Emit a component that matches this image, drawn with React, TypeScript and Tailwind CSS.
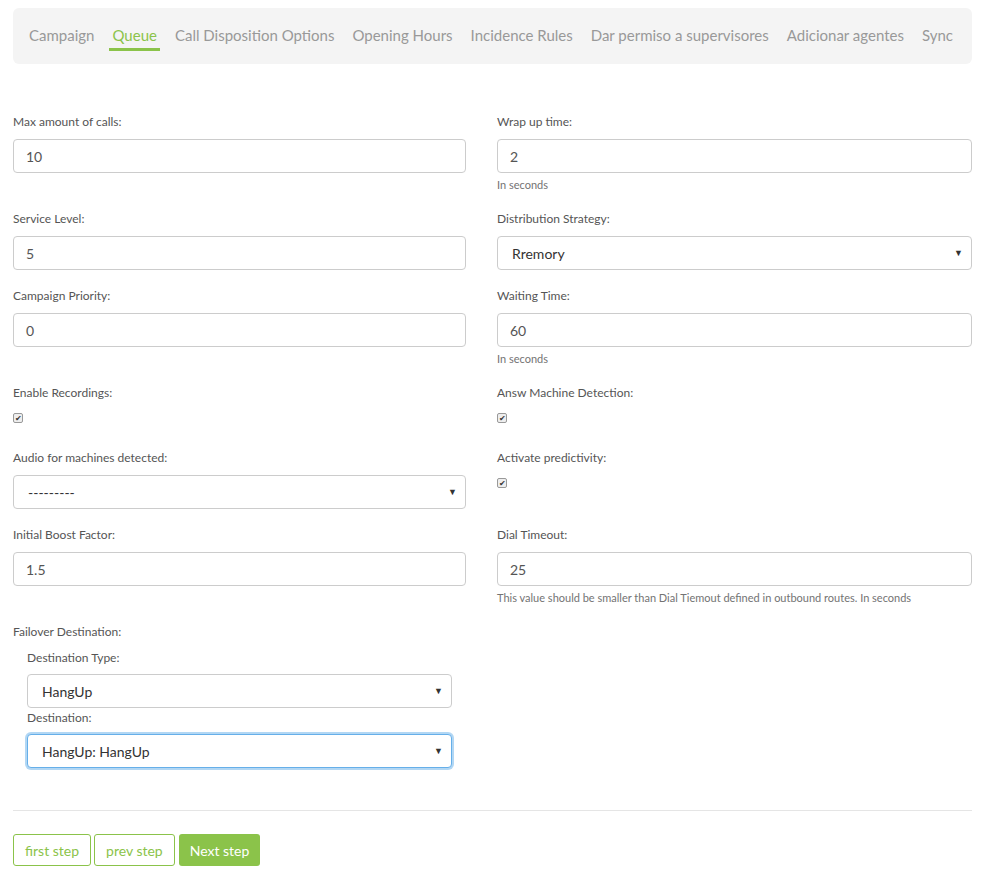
import React from "react";

const F = { fontFamily: "Lato, 'Open Sans', sans-serif" };

function Label({ children }: { children: React.ReactNode }) {
  return <div className="text-[12px] leading-[18px] text-[#555] mb-[8px]">{children}</div>;
}
function Input({ v }: { v: string }) {
  return <div className="h-[34px] border border-[#ccc] rounded-[4px] px-[12px] flex items-center text-[14px] text-[#555] bg-white">{v}</div>;
}
function Select({ v, focus }: { v: string; focus?: boolean }) {
  return (
    <div className={`h-[34px] border rounded-[4px] pl-[14px] pr-[8px] flex items-center justify-between text-[14px] text-[#333] bg-white ${focus ? "border-[#66afe9] shadow-[0_0_0_2px_rgba(102,175,233,0.5)]" : "border-[#ccc]"}`}>
      <span>{v}</span><span className="text-[9px] text-[#333]">▼</span>
    </div>
  );
}
function Help({ children }: { children: React.ReactNode }) {
  return <div className="mt-[4px] h-[16px] text-[11px] leading-[16px] text-[#737373]">{children}</div>;
}
function Check() {
  return (
    <div className="w-[10px] h-[10px] border border-[#999] rounded-[2px] bg-[#eee] flex items-center justify-center text-[8px] leading-none text-[#333]">✔</div>
  );
}

export default function App() {
  const tabs = ["Campaign", "Queue", "Call Disposition Options", "Opening Hours", "Incidence Rules", "Dar permiso a supervisores", "Adicionar agentes", "Sync"];
  return (
    <div style={F} className="w-[988px] min-h-[882px] bg-white px-[13px] pt-[8px] text-[#555] pr-[16px]">
      <div className="h-[56px] bg-[#f4f4f4] rounded-[6px] flex items-start pl-[16px] pt-[17px] gap-[18px]">
        {tabs.map((t, i) => (
          <div key={t} className={`text-[15px] leading-[20px] ${i === 1 ? "text-[#8bc34a] border-b-[3px] border-[#8bc34a] px-[3px] -mx-[3px] pb-[3px]" : "text-[#999]"}`}>{t}</div>
        ))}
      </div>
      <div className="grid grid-cols-[453px_475px] gap-x-[31px] mt-[49px]">
        <div className="mb-[17px]"><Label>Max amount of calls:</Label><Input v="10" /></div>
        <div className="mb-[17px]"><Label>Wrap up time:</Label><Input v="2" /><Help>In seconds</Help></div>
        <div className="mb-[17px]"><Label>Service Level:</Label><Input v="5" /></div>
        <div className="mb-[17px]"><Label>Distribution Strategy:</Label><Select v="Rremory" /></div>
        <div className="mb-[17px]"><Label>Campaign Priority:</Label><Input v="0" /></div>
        <div className="mb-[17px]"><Label>Waiting Time:</Label><Input v="60" /><Help>In seconds</Help></div>
        <div className="mb-[23px]"><Label>Enable Recordings:</Label><div className="pt-[3px] pb-[3px]"><Check /></div></div>
        <div className="mb-[23px]"><Label>Answ Machine Detection:</Label><div className="pt-[3px] pb-[3px]"><Check /></div></div>
        <div className="mb-[17px]"><Label>Audio for machines detected:</Label><Select v="---------" /></div>
        <div className="mb-[17px]"><Label>Activate predictivity:</Label><div className="pt-[3px]"><Check /></div></div>
        <div className="mb-[17px]"><Label>Initial Boost Factor:</Label><Input v="1.5" /></div>
        <div className="mb-[17px]"><Label>Dial Timeout:</Label><Input v="25" /><Help>This value should be smaller than Dial Tiemout defined in outbound routes. In seconds</Help></div>
        <div>
          <Label>Failover Destination:</Label>
          <div className="pl-[14px] pr-[14px]">
            <div className="text-[12px] leading-[18px] text-[#555] mb-[7px]">Destination Type:</div>
            <Select v="HangUp" />
            <div className="text-[12px] leading-[18px] text-[#555] mt-[1px] mb-[7px]">Destination:</div>
            <Select v="HangUp: HangUp" focus />
          </div>
        </div>
        <div />
      </div>
      <div className="border-t border-[#e5e5e5] mt-[42px] mb-[23px]" />
      <div className="flex gap-[3px]">
        <div className="h-[32px] px-[11px] border border-[#8bc34a] rounded-[3px] text-[#8bc34a] text-[14px] flex items-center">first step</div>
        <div className="h-[32px] px-[11px] border border-[#8bc34a] rounded-[3px] text-[#8bc34a] text-[14px] flex items-center">prev step</div>
        <div className="h-[32px] px-[11px] ml-[1px] bg-[#8bc34a] rounded-[3px] text-white text-[14px] flex items-center">Next step</div>
      </div>
    </div>
  );
}
